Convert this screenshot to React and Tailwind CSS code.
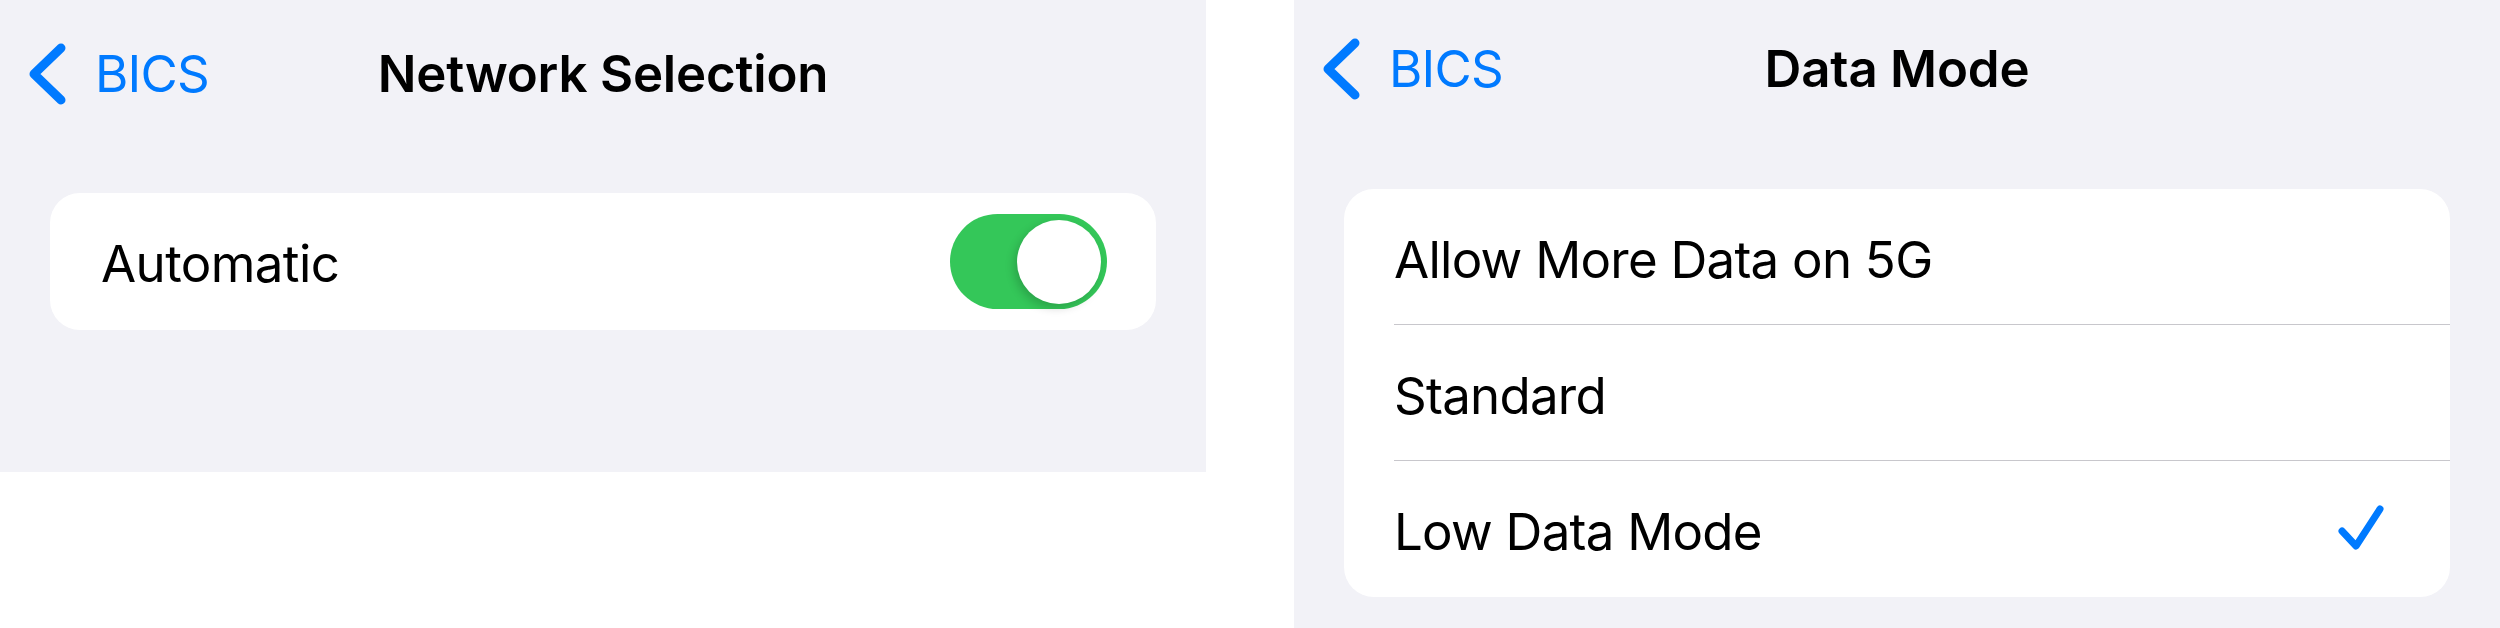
import React from "react";

const font = { fontFamily: 'Inter, "Liberation Sans", sans-serif' };

function Chevron() {
  return (
    <svg width="40" height="64" viewBox="0 0 40 64" className="shrink-0">
      <path d="M33 7 L6 33 L33 59" fill="none" stroke="#007aff" strokeWidth="9" strokeLinecap="round" strokeLinejoin="round" />
    </svg>
  );
}

function Check() {
  return (
    <svg width="56" height="52" viewBox="0 0 56 52" className="shrink-0">
      <path d="M6 28 L20 43 L44 6" fill="none" stroke="#007aff" strokeWidth="7" strokeLinecap="round" strokeLinejoin="round" />
    </svg>
  );
}

function NavBar({ title }) {
  return (
    <div className="grid grid-cols-[1fr_auto_1fr] items-center h-[61px]">
      <div className="flex items-center pl-[28px]">
        <Chevron />
        <span className="ml-[27px] text-[51px] leading-[61px] text-[#007aff] tracking-[-0.8px]">BICS</span>
      </div>
      <div className="text-[51px] leading-[61px] font-semibold text-black tracking-[-0.2px]">{title}</div>
      <div />
    </div>
  );
}

function Toggle() {
  return (
    <div className="relative w-[157px] h-[95px] rounded-full bg-[#34c759] shrink-0">
      <div className="absolute right-[6px] top-[6px] w-[84px] h-[84px] rounded-full bg-white shadow-[-3px_4px_10px_rgba(0,0,0,0.18)]" />
    </div>
  );
}

function Row({ label, right, last }) {
  return (
    <div className="relative flex items-center justify-between h-[136px] pl-[50px] pr-[58px]">
      <span className="text-[51px] leading-[61px] text-black tracking-[-0.75px] pt-[4px]">{label}</span>
      {right}
      {!last && <div className="absolute left-[50px] right-0 bottom-0 h-px bg-[#c8c7cc]" />}
    </div>
  );
}

export default function App() {
  return (
    <div className="flex w-[2500px] h-[628px] bg-white gap-[88px]" style={font}>
      <div className="w-[1206px] h-[472px] bg-[#f2f2f7] flex flex-col pt-[41px]">
        <NavBar title="Network Selection" />
        <div className="mx-[50px] mt-[91px] h-[137px] bg-white rounded-[30px] flex items-center justify-between pl-[51px] pr-[49px]">
          <span className="text-[51px] leading-[61px] text-black tracking-[-0.6px] pt-[4px]">Automatic</span>
          <Toggle />
        </div>
      </div>
      <div className="w-[1206px] h-[628px] bg-[#f2f2f7] flex flex-col pt-[36px]">
        <NavBar title="Data Mode" />
        <div className="mx-[50px] mt-[92px] bg-white rounded-[30px] flex flex-col overflow-hidden">
          <Row label="Allow More Data on 5G" />
          <Row label="Standard" />
          <Row label="Low Data Mode" right={<Check />} last />
        </div>
      </div>
    </div>
  );
}
